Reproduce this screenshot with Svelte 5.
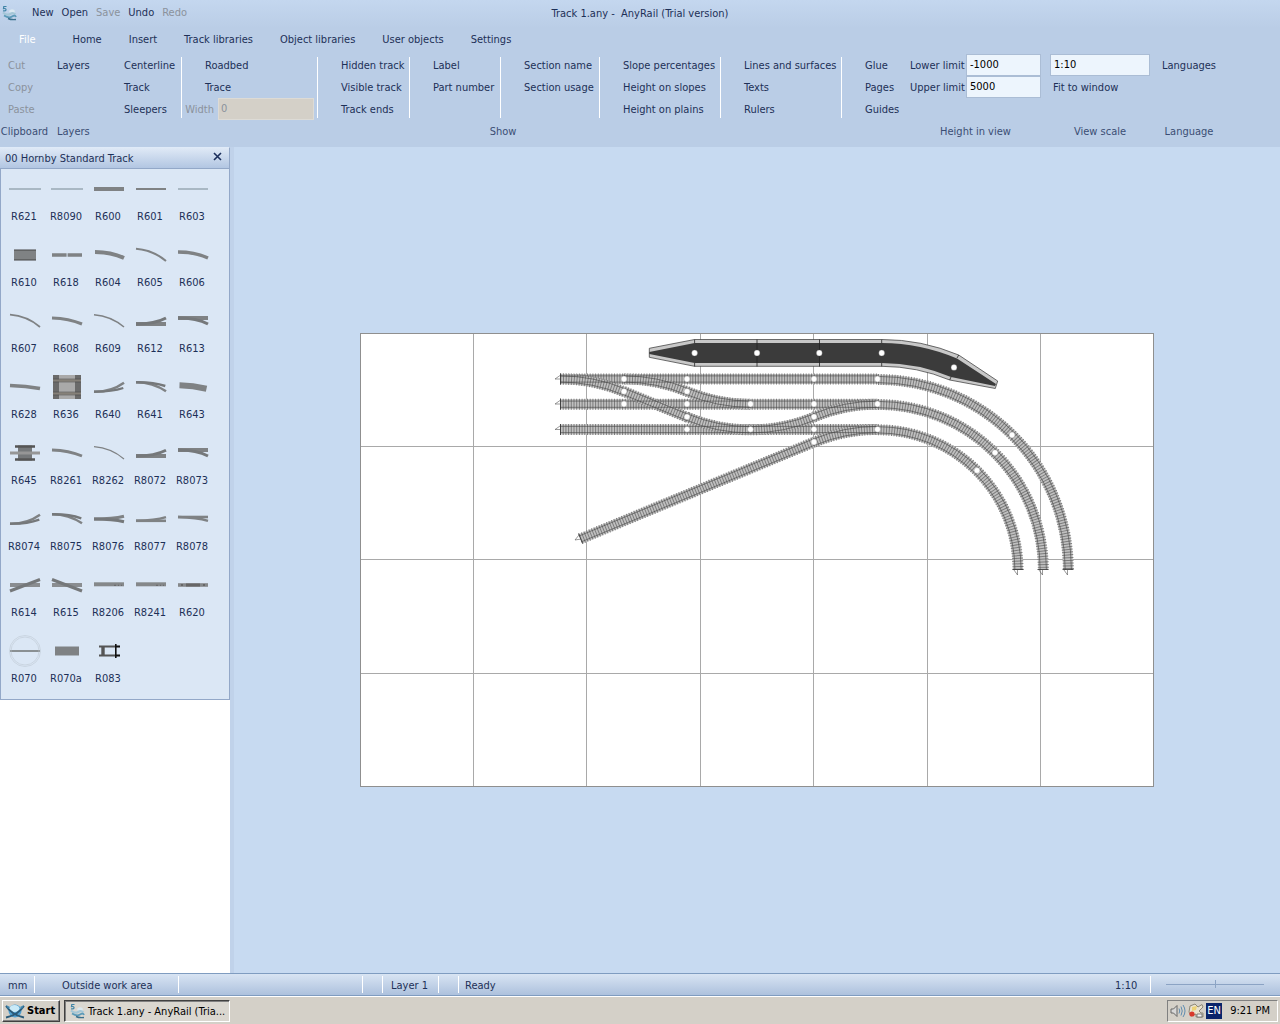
<script>
  const tabs = ['Home', 'Insert', 'Track libraries', 'Object libraries', 'User objects', 'Settings'];

  const show = [
    ['Centerline', 'Track', 'Sleepers'],
    ['Roadbed', 'Trace'],
    ['Hidden track', 'Visible track', 'Track ends'],
    ['Label', 'Part number'],
    ['Section name', 'Section usage'],
    ['Slope percentages', 'Height on slopes', 'Height on plains'],
    ['Lines and surfaces', 'Texts', 'Rulers'],
    ['Glue', 'Pages', 'Guides']
  ];

  // Palette parts: each stroke is [path, width, colour]
  const g = '#7f8284';
  const d = '#75787a';
  const l = '#a9b8c4';
  const parts = [
    ['R621', [['M-16 0H16', 2, l]]],
    ['R8090', [['M-16 0H16', 2, l]]],
    ['R600', [['M-15 0H15', 4, g]]],
    ['R601', [['M-15 0H15', 2, g]]],
    ['R603', [['M-15 0H15', 2, l]]],
    ['R610', [['M-11 0H11', 10, g], ['M-11 -5H11M-11 5H11', 1, '#444']]],
    ['R618', [['M-15 0H-0.4M0.6 0H15', 3.6, g]]],
    ['R604', [['M-14 -3Q2 -3 15 3', 4, g]]],
    ['R605', [['M-15 -6.3Q2 -5 15 6', 2, g]]],
    ['R606', [['M-15 -3Q2 -3 15 3', 3.3, g]]],
    ['R607', [['M-15 -6.3Q2 -5 15 6', 1.8, g]]],
    ['R608', [['M-15 -3Q2 -2.5 15 3', 3, g]]],
    ['R609', [['M-15 -6.3Q2 -5 15 6', 1.5, g]]],
    ['R612', [['M-15 3H15', 4, g], ['M-15 3Q4 3 15 -3', 3, d]]],
    ['R613', [['M-15 -3H15', 4, g], ['M-15 -3Q4 -3 15 3', 3, d]]],
    ['R628', [['M-15 -1.5Q1 -1 15 1.5', 3.6, g]]],
    ['R636', [['M-14 0H14', 24, '#6a6a6a'], ['M-8 0H8', 24, '#a9a9a9'], ['M-14 -6.5H14M-14 6.5H14', 2.6, '#858078'], ['M-14 -8H14M-14 -5H14M-14 5H14M-14 8H14', 0.5, '#444']]],
    ['R640', [['M-15 4.7Q2 5 15 -4.3', 2.5, g], ['M-15 4.7Q2 5 14.3 1', 2.2, d]]],
    ['R641', [['M-15 -4.7Q2 -4.5 15 4.3', 2.5, g], ['M-15 -4.7Q2 -5 14.3 -1', 2.5, d]]],
    ['R643', [['M-13.5 -1.7Q0 -1.3 13.5 1.7', 6, g]]],
    ['R645', [['M-7 0H7', 15, d], ['M-10 -6.5H10M-10 6.5H10', 2.6, '#555'], ['M-15 0H15', 3, '#969696']]],
    ['R8261', [['M-15 -3Q2 -2.5 15 3', 2.8, g]]],
    ['R8262', [['M-15 -6.3Q2 -5 15 6', 1.2, g]]],
    ['R8072', [['M-15 3H15', 4, g], ['M-15 3Q4 3 15 -2.7', 2.8, d]]],
    ['R8073', [['M-15 -3H15', 4, g], ['M-15 -3Q4 -3 15 3', 2.8, d]]],
    ['R8074', [['M-15 4.7Q2 5 15 -4.3', 2.4, g], ['M-15 4.7Q2 5 14.3 0.6', 2.2, d]]],
    ['R8075', [['M-15 -4.7Q2 -4.5 15 4.3', 2.4, g], ['M-15 -4.7Q2 -5 14.3 -0.7', 2.4, d]]],
    ['R8076', [['M-15 0Q4 0 15 -2.7', 3, g], ['M-15 0Q4 0 15 2.7', 3, d]]],
    ['R8077', [['M-15 1.8H15', 2.6, g], ['M-15 1.8Q4 1.6 15 -1.8', 2.4, g]]],
    ['R8078', [['M-15 -2H15', 2.6, g], ['M-15 -2Q4 -1.6 15 1.8', 2.4, g]]],
    ['R614', [['M-15 0H15', 4, '#8a8d90'], ['M-15 6L15 -5.5', 3, d]]],
    ['R615', [['M-15 0H15', 4, '#8a8d90'], ['M-15 -5.5L15 6', 3, d]]],
    ['R8206', [['M-15 -0.7H15', 4, '#85888a'], ['M5 0.3H7M9 0.3H10M12 0.3H13', 1, '#666']]],
    ['R8241', [['M-15 -0.7H15', 4, '#85888a'], ['M5 0.3H7M9 0.3H10M12 0.3H13', 1, '#666']]],
    ['R620', [['M-15 0H15', 3.6, '#85888a'], ['M-7 0H7', 3, '#666'], ['M-12 0H-10M10 0H12', 2, '#666']]],
    ['R070', [['M-15 0H15', 2, '#8a9093'], ['M-15.5 0A15.5 15.5 0 1 1 15.5 0A15.5 15.5 0 1 1 -15.5 0M-14 0A14 14 0 1 1 14 0A14 14 0 1 1 -14 0', 0.5, '#b9c2cc']]],
    ['R070a', [['M-12 0H12', 9, g]]],
    ['R083', [['M-10 -4.5H11M-10 4.5H11', 2, '#555'], ['M-6 -5V5', 3.4, '#555'], ['M6.8 -7V7M7 -4.5H11M7 4.5H11', 1.6, '#111']]]
  ];

  // Track geometry on the plan
  const GAUGE = 3.1;
  const line = (x1, y1, x2, y2) => (o) => {
    const n = Math.hypot(x2 - x1, y2 - y1);
    const dx = (-(y2 - y1) / n) * o;
    const dy = ((x2 - x1) / n) * o;
    return `M${x1 + dx} ${y1 + dy}L${x2 + dx} ${y2 + dy}`;
  };
  const arc = (cx, cy, r, from, to) => (o) => {
    const p = (a) => `${cx + (r + o) * Math.cos((a * Math.PI) / 180)} ${cy + (r + o) * Math.sin((a * Math.PI) / 180)}`;
    return `M${p(from)}A${r + o} ${r + o} 0 0 ${to > from ? 1 : 0} ${p(to)}`;
  };
  const R = 165.6;
  const tracks = [
    line(560, 379, 878, 379),
    line(560, 404.2, 878, 404.2),
    line(560, 429.5, 878, 429.5),
    arc(560.3, 379 + R, R, -90, -67.5),
    line(623.7, 391.4, 687.2, 417.3),
    arc(750.6, 429.8 - R, R, 112.5, 67.5),
    arc(877.6, 404.2 + R, R, -112.5, -90),
    arc(623.9, 379 + R, R, -90, -67.5),
    arc(750.6, 404.2 - R, R, 112.5, 90),
    arc(877.6, 429.5 + R, R, -112.5, -90),
    line(580.5, 538.8, 814.2, 442),
    arc(878, 569.8, 190.3, -90, 0),
    arc(878, 569.8, 165.3, -90, 0),
    arc(878, 569.8, 140, -90, 0)
  ];
  const joints = [
    [624, 379], [687, 379], [814, 379], [877.5, 379], [624, 391.4], [687, 391.4],
    [624, 404], [687, 404], [750.5, 404], [814, 404], [877.5, 404], [687, 416.8], [814, 416.8],
    [687, 429.3], [750.5, 429.3], [814, 429.3], [877.5, 429.3], [814, 442],
    [1012, 435], [995, 452.6], [977, 470.4],
    [694.6, 353], [757, 353], [819.3, 353], [881.7, 353], [954, 367.4]
  ];
  const columns = [473.5, 586.5, 700.5, 813.5, 927, 1040.5];
  const rows = [446.5, 559.5, 673.5];
</script>

{#snippet logo()}
  <svg class="logo" viewBox="0 0 16 16" aria-hidden="true">
    <path d="M5.500 1.500H2.800L2.500 3.600Q5.300 3.200 5 5Q4.600 6.300 2 5.800" fill="none" stroke="#3f84a6" stroke-width="1.200" />
    <path d="M8 6Q10 3 13.500 5L14 9L9 8Z" fill="#d9e8f0" />
    <path d="M2 7.500Q6 11 9 9T14.500 9.500" fill="none" stroke="#a3c6d6" stroke-width="2.200" />
    <path d="M3 10.500Q8 13.500 11 11.500T15 12" fill="none" stroke="#5b9ab8" stroke-width="1.800" />
    <path d="M7 13.500Q10 15 15 14.500" fill="none" stroke="#3a6f8c" stroke-width="1.400" />
  </svg>
{/snippet}

<div class="app">
  <header class="top">
    <div class="titlebar">
      <div class="quick">
        {@render logo()}
        <button>New</button>
        <button>Open</button>
        <button disabled>Save</button>
        <button>Undo</button>
        <button disabled>Redo</button>
      </div>
      <h1>Track 1.any -&nbsp; AnyRail (Trial version)</h1>
    </div>

    <nav class="tabs">
      <button class="file">File</button>
      {#each tabs as tab}<button>{tab}</button>{/each}
    </nav>

    <div class="ribbon">
      <section class="group clipboard">
        <div class="col">
          <button disabled>Cut</button>
          <button disabled>Copy</button>
          <button disabled>Paste</button>
        </div>
        <h2>Clipboard</h2>
      </section>
      <section class="group layers">
        <div class="col"><button>Layers</button></div>
        <h2>Layers</h2>
      </section>
      <section class="group">
        <div class="show">
          {#each show as items, i}
            <div class="col">
              {#each items as item}<button>{item}</button>{/each}
              {#if i === 1}
                <label class="width"><span>Width</span><input value="0" disabled /></label>
              {/if}
            </div>
          {/each}
        </div>
        <h2>Show</h2>
      </section>
      <section class="group limits">
        <div class="col">
          <label><span>Lower limit</span><input value="-1000" /></label>
          <label><span>Upper limit</span><input value="5000" /></label>
        </div>
        <h2>Height in view</h2>
      </section>
      <section class="group scale">
        <div class="col">
          <input value="1:10" aria-label="View scale" />
          <button>Fit to window</button>
        </div>
        <h2>View scale</h2>
      </section>
      <section class="group language">
        <div class="col"><button>Languages</button></div>
        <h2>Language</h2>
      </section>
    </div>
  </header>

  <main>
    <aside>
      <div class="panelhead">
        <h2>00 Hornby Standard Track</h2>
        <button aria-label="Close">
          <svg viewBox="0 0 9 9"><path d="M1 1L8 8M8 1L1 8" stroke="#1c2f5c" stroke-width="1.600" /></svg>
        </button>
      </div>
      <div class="parts">
        {#each parts as [name, strokes]}
          <button class="part">
            <svg viewBox="-17 -17 34 34" aria-hidden="true">
              {#each strokes as [path, w, colour]}
                <path d={path} fill="none" stroke={colour} stroke-width={w} />
              {/each}
            </svg>
            <span>{name}</span>
          </button>
        {/each}
      </div>
    </aside>

    <div class="work">
      <svg class="plan" viewBox="360 333 794 454" role="img" aria-label="Track plan">
        <rect x="360.500" y="333.500" width="793" height="453" fill="#fff" stroke="#8f8f8f" />
        <g stroke="#a9a9a9" shape-rendering="crispEdges">
          {#each columns as x}<line x1={x} x2={x} y1="334" y2="786" />{/each}
          {#each rows as y}<line x1="361" x2="1153" y1={y} y2={y} />{/each}
        </g>

        <path d="M649.300 348.300L694.600 339.500H881.700A199 199 0 0 1 958.700 355L997.700 381L995.300 388.500L949.700 380A178 178 0 0 0 881.700 366.300H694.600L649.300 357.300Z" fill="#c8c8c8" stroke="#333" stroke-width="0.700" />
        <path d="M649.300 352L694.600 343H881.700A196 196 0 0 1 957 358.500L996 384L995 386L951 377A181 181 0 0 0 881.700 363H694.600L649.300 354Z" fill="#3b3b3b" />
        <path d="M694.600 339.500V343M694.600 363V366.500M757 339.500V366.500M819.500 339.500V366.500M881.700 339.500V343M881.700 363V366.500M958.700 355L957 358M949.700 380L951 377" stroke="#222" stroke-width="0.800" />

        <g fill="none">
          {#each tracks as t}
            <path d={t(0)} stroke="#c0c0c0" stroke-width="10" />
            <path d={t(0)} stroke="#7c7c7c" stroke-width="11" stroke-dasharray="1 1.700" />
          {/each}
          {#each tracks as t}
            <path d={t(GAUGE)} stroke="#444" stroke-width="0.600" />
            <path d={t(-GAUGE)} stroke="#444" stroke-width="0.600" />
          {/each}
          <path d="M560.500 373.500V384.500M560.500 398.500V409.500M560.500 424V435M578.500 533.500L582.500 543.500M1012.500 569.500H1023.500M1037.500 569.500H1048.500M1062.500 569.500H1073.500" stroke="#333" stroke-width="0.800" />
          <path d="M560 375.500L555 379H560M560 400.500L555 404H560M560 426L555 429.500H560M579 535L575 540L581 539M1014 570L1017.500 575V570M1039 570L1042.500 575V570M1064 570L1067.500 575V570" stroke="#555" stroke-width="0.600" />
        </g>
        {#each joints as [x, y]}
          <circle cx={x} cy={y} r="2.900" fill="#fff" stroke="#777" stroke-width="0.300" />
        {/each}
      </svg>
    </div>
  </main>

  <footer class="status">
    <span class="unit">mm</span>
    <span class="where">Outside work area</span>
    <span class="blank"></span>
    <span class="gap"></span>
    <span class="layer">Layer 1</span>
    <span class="gap"></span>
    <span class="ready">Ready</span>
    <span class="ratio">1:10</span>
    <input type="range" aria-label="Zoom" />
  </footer>

  <div class="taskbar">
    <button class="start">
      <svg viewBox="0 0 20 16" aria-hidden="true">
        <circle cx="10" cy="8" r="6.500" fill="#4f9fd0" />
        <ellipse cx="9.500" cy="5.500" rx="5" ry="3.500" fill="#c9eaf8" />
        <path d="M1 3Q7 12 19 14.500M19 3Q13 12 1 14.500" fill="none" stroke="#2b5a78" stroke-width="1.800" />
        <path d="M1 2L5 4L3 6ZM19 2L15 4L17 6Z" fill="#3f86b0" />
      </svg>
      Start
    </button>
    <button class="task">{@render logo()}<span>Track 1.any - AnyRail (Tria...</span></button>
    <div class="tray">
      <svg viewBox="0 0 16 16" aria-hidden="true">
        <path d="M1 6H3.500L7 2.500V13.500L3.500 10H1Z" fill="#d8d8d8" stroke="#666" />
        <path d="M9 5.500Q10.500 8 9 10.500M11 3.500Q13.500 8 11 12.500M13 2Q17 8 13 14" fill="none" stroke="#5f8cb0" />
      </svg>
      <svg viewBox="0 0 16 16" aria-hidden="true">
        <path d="M2 3L7 1L10 4L14 1.500L15 4L11 8L13 10H15V14H8V11L3 13L1 9Z" fill="#e9e2cf" stroke="#8c8778" />
        <path d="M4 4L9 3L8 7L4 8Z" fill="#ecd277" />
        <circle cx="4" cy="11" r="2.600" fill="#d8382c" />
        <path d="M9 11H14V14H9Z" fill="#f4f4f4" stroke="#666" stroke-width="0.800" />
      </svg>
      <span class="lang">EN</span>
      <time>9:21 PM</time>
    </div>
  </div>
</div>

<style>
  :global(body) {
    margin: 0;
  }
  .app {
    display: flex;
    flex-direction: column;
    min-height: 100vh;
    font: 11px/22px Tahoma, 'DejaVu Sans Condensed', 'Noto Sans', sans-serif;
    color: #1d3057;
    background: #c7daf1;
    white-space: nowrap;
  }
  .app * {
    box-sizing: border-box;
  }
  h1,
  h2 {
    margin: 0;
    font: inherit;
  }
  button,
  input {
    font: inherit;
    color: inherit;
    border: 0;
    margin: 0;
    padding: 0;
    background: none;
    border-radius: 0;
  }
  button {
    text-align: left;
  }
  button:disabled {
    color: #8b929c;
  }
  .top {
    background: linear-gradient(#c4d7ef, #bacde6 28px, #bacde6);
    padding-bottom: 5px;
  }
  .titlebar {
    display: grid;
    grid-template-columns: 1fr auto 1fr;
    height: 26px;
  }
  .titlebar h1 {
    line-height: 28px;
  }
  .quick {
    display: flex;
    gap: 8px;
    padding-left: 1px;
    height: 26px;
    align-items: center;
  }
  .logo {
    width: 16px;
    height: 16px;
    flex: none;
  }
  .quick .logo {
    margin-right: 7px;
  }
  .tabs {
    display: flex;
    gap: 27px;
    height: 28px;
    padding-left: 19px;
  }
  .tabs button {
    line-height: 28px;
    height: 28px;
  }
  .tabs .file {
    color: #fff;
    margin-right: 10px;
  }
  .ribbon {
    display: flex;
  }
  .group {
    display: flex;
    flex-direction: column;
  }
  .group h2 {
    text-align: center;
    color: #3b4d74;
    padding-top: 2px;
    line-height: 20px;
  }
  .col {
    display: flex;
    flex-direction: column;
    height: 66px;
  }
  .col label {
    height: 22px;
  }
  .col button,
  .col label span {
    height: 22px;
    padding-top: 2px;
    line-height: 20px;
  }
  .clipboard {
    width: 49px;
  }
  .clipboard .col {
    padding-left: 8px;
  }
  .layers {
    width: 67px;
    padding-left: 8px;
  }
  .layers h2 {
    text-align: left;
  }
  .show {
    display: grid;
    grid-template-columns: 66px 136px 92px 91px 99px 121px 121px 48px;
  }
  .show .col {
    padding-left: 23px;
    background: linear-gradient(#fff, #fff) right center / 1px 61px no-repeat;
  }
  .show .col:first-child {
    padding-left: 8px;
  }
  .show .col:last-child {
    background: none;
  }
  .show .width {
    display: flex;
    justify-content: flex-end;
    gap: 4px;
    padding-right: 4px;
    color: #8b929c;
  }
  .width input {
    width: 96px;
    height: 22px;
    background: #d4d0c8;
    border: 1px solid #dddbd6;
    padding-left: 2px;
  }
  .col input:not(:disabled) {
    height: 22px;
    color: #000;
    background: #edf5fd;
    border: 1px solid #abbdd5;
    padding-left: 3px;
  }
  .limits {
    width: 151px;
    padding-left: 20px;
  }
  .limits label {
    display: flex;
    justify-content: space-between;
  }
  .limits input {
    width: 75px;
  }
  .scale {
    width: 100px;
    margin-left: 9px;
  }
  .scale button {
    padding-left: 3px;
  }
  .language {
    margin-left: 12px;
  }
  main {
    display: flex;
    flex: 1;
  }
  aside {
    width: 230px;
    background: #fff;
    flex: none;
  }
  .panelhead {
    display: flex;
    justify-content: space-between;
    height: 22px;
    padding: 0 7px 0 5px;
    border: 1px solid #93a8c8;
    border-top-color: #dfeaf8;
    border-left: 0;
    background: linear-gradient(#dfe9f6, #b2c6e2);
    line-height: 22px;
  }
  .panelhead button {
    display: flex;
    padding-top: 4px;
  }
  .panelhead svg {
    width: 9px;
    height: 9px;
  }
  .parts {
    display: grid;
    grid-template-columns: repeat(auto-fill, 42px);
    grid-auto-rows: 66px;
    padding: 1px 0 1px 3px;
    border: 1px solid #93a8c8;
    border-top: 0;
    background: #dbe7f5;
  }
  .part {
    display: flex;
    flex-direction: column;
    align-items: center;
    padding-top: 2px;
  }
  .part svg {
    width: 34px;
    height: 34px;
    flex: none;
  }
  .part span {
    line-height: 22px;
    margin-right: 2px;
  }
  .work {
    flex: 1;
    display: flex;
    align-items: center;
    justify-content: center;
    border-left: 4px solid #c0d2ea;
    background: #c7daf1;
  }
  .plan {
    width: 76%;
    max-width: 794px;
  }
  .status {
    display: flex;
    height: 23px;
    border-top: 1px solid #7f9cc0;
    border-bottom: 1px solid #7f9cc0;
    background: linear-gradient(#d8e4f3, #adc1dd);
    line-height: 20px;
  }
  .status span {
    padding-top: 2px;
    background: linear-gradient(#fff, #fff) right center / 1px 17px no-repeat;
  }
  .unit {
    width: 35px;
    padding-left: 8px;
  }
  .where {
    width: 144px;
    padding-left: 27px;
  }
  .blank {
    width: 184px;
  }
  .gap {
    width: 20px;
  }
  .layer {
    width: 56px;
    padding-left: 8px;
  }
  .status .ready {
    flex: 1;
    padding-left: 6px;
    background: none;
  }
  .ratio {
    width: 36px;
  }
  .status input {
    appearance: none;
    width: 98px;
    height: 20px;
    margin: 0 16px 0 15px;
    background: linear-gradient(#8ba3c4, #8ba3c4) center / 100% 1px no-repeat;
  }
  .status input::-webkit-slider-thumb {
    appearance: none;
    width: 1px;
    height: 8px;
    background: #8ba3c4;
  }
  .taskbar {
    display: flex;
    gap: 4px;
    height: 28px;
    padding: 3px 2px 2px;
    border-top: 1px solid #fff;
    background: #d4d0c8;
    color: #000;
  }
  .start,
  .task {
    display: flex;
    align-items: center;
    gap: 2px;
    border: 1px solid;
    height: 22px;
  }
  .start {
    width: 58px;
    padding-left: 2px;
    font-weight: bold;
    border-color: #fff #404040 #404040 #fff;
    box-shadow: inset -1px -1px #808080;
  }
  .start svg {
    width: 20px;
    height: 16px;
    flex: none;
  }
  .task {
    width: 166px;
    gap: 3px;
    padding-left: 4px;
    border-color: #404040 #fff #fff #404040;
    box-shadow: inset 1px 1px #808080;
    background: #dad7d0;
  }
  .task span {
    padding-top: 1px;
  }
  .tray {
    display: flex;
    align-items: center;
    gap: 2px;
    margin-left: auto;
    padding: 0 7px 0 2px;
    border: 1px solid;
    border-color: #808080 #fff #fff #808080;
  }
  .tray svg {
    width: 16px;
    height: 16px;
  }
  .lang {
    width: 16px;
    line-height: 16px;
    text-align: center;
    color: #fff;
    background: #0a246a;
  }
  .tray time {
    margin-left: 6px;
  }
</style>
